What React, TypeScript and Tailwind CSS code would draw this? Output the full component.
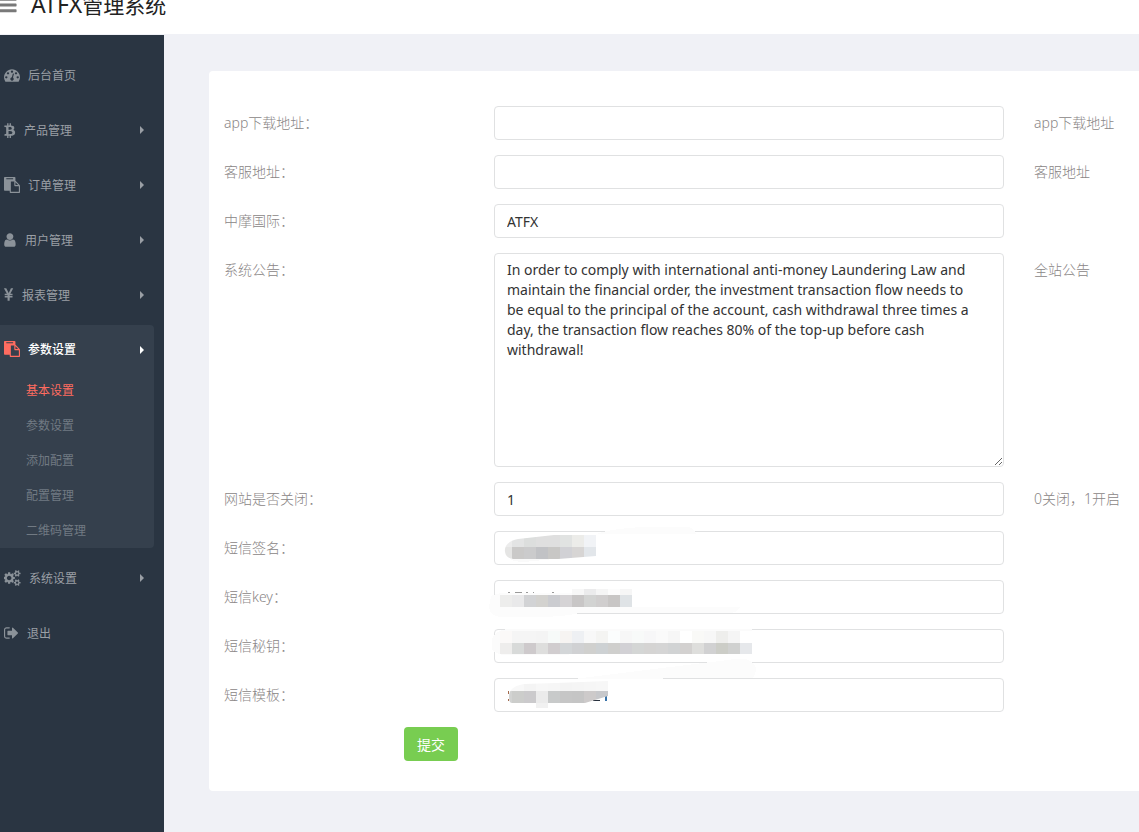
import { useState } from "react";
import type { ReactNode } from "react";

type IconProps = { d: string; viewBox: string; className: string };

function Icon({ d, viewBox, className }: IconProps) {
  return (
    <svg viewBox={viewBox} className={className} fill="currentColor" aria-hidden="true">
      <path d={d} />
    </svg>
  );
}

const BARS =
  "M1664 1344v128q0 26-19 45t-45 19h-1408q-26 0-45-19t-19-45v-128q0-26 19-45t45-19h1408q26 0 45 19t19 45zm0-512v128q0 26-19 45t-45 19h-1408q-26 0-45-19t-19-45v-128q0-26 19-45t45-19h1408q26 0 45 19t19 45zm0-512v128q0 26-19 45t-45 19h-1408q-26 0-45-19t-19-45v-128q0-26 19-45t45-19h1408q26 0 45 19t19 45z";
const DASHBOARD =
  "M384 1152q0-53-37.5-90.5t-90.5-37.5-90.5 37.5-37.5 90.5 37.5 90.5 90.5 37.5 90.5-37.5 37.5-90.5zm192-448q0-53-37.5-90.5t-90.5-37.5-90.5 37.5-37.5 90.5 37.5 90.5 90.5 37.5 90.5-37.5 37.5-90.5zm428 481l101-382q6-26-7.5-48.5t-38.5-29.5-48 6.5-30 39.5l-101 382q-60 5-107 43.5t-63 98.5q-20 77 20 146t117 89 146-20 89-117q16-60-6-117t-72-91zm660-33q0-53-37.5-90.5t-90.5-37.5-90.5 37.5-37.5 90.5 37.5 90.5 90.5 37.5 90.5-37.5 37.5-90.5zm-640-640q0-53-37.5-90.5t-90.5-37.5-90.5 37.5-37.5 90.5 37.5 90.5 90.5 37.5 90.5-37.5 37.5-90.5zm448 192q0-53-37.5-90.5t-90.5-37.5-90.5 37.5-37.5 90.5 37.5 90.5 90.5 37.5 90.5-37.5 37.5-90.5zm320 448q0 261-141 483-19 29-54 29h-1402q-35 0-54-29-141-221-141-483 0-182 71-348t191-286 286-191 348-71 348 71 286 191 191 286 71 348z";
const BITCOIN =
  "M1217 644q18 182-131 258 117 28 175 103t45 214q-7 71-32.5 125t-64.5 89-97 58.5-121.5 34.5-145.5 15v255h-154v-251q-80 0-122-1v252h-154v-255q-18 0-54-.5t-55-.5h-200l31-183h111q50 0 58-51v-402h16q-6-1-16-1v-287q-13-68-89-68h-111v-164l212 1q64 0 97-1v-252h154v247q82-2 122-2v-245h154v252q79 7 140 22.5t113 45 82.5 78 36.5 114.5zm-215 545q0-36-15-64t-37-46-57.5-30.5-65.5-18.5-74-9-69-3-64.5 1-47.5 1v338q8 0 37 .5t48 .5 53-1.5 58.5-4 57-8.5 55.5-14 47.5-21 39.5-30 24.5-40 9.5-51zm-71-476q0-33-12.5-58.5t-30.5-42-48-28-55-16.5-61.5-8-58-2.5-54 1-39.5.5v307q5 0 34.5.5t46.5 0 50-2 55-5.5 51.5-11 48.5-18.5 37-27 27-38.5 9-51z";
const PASTE =
  "M768 1664h896v-640h-416q-40 0-68-28t-28-68v-416h-384v1152zm256-1440v-64q0-13-9.5-22.5t-22.5-9.5h-704q-13 0-22.5 9.5t-9.5 22.5v64q0 13 9.5 22.5t22.5 9.5h704q13 0 22.5-9.5t9.5-22.5zm256 672h299l-299-299v299zm512 128v672q0 40-28 68t-68 28h-960q-40 0-68-28t-28-68v-160h-544q-40 0-68-28t-28-68v-1344q0-40 28-68t68-28h1088q40 0 68 28t28 68v328q21 13 36 28l408 408q28 28 48 76t20 88z";
const USER =
  "M1536 1399q0 109-62.5 187t-150.5 78h-854q-88 0-150.5-78t-62.5-187q0-85 8.5-160.5t31.5-152 58.5-131 94-89 134.5-34.5q131 128 313 128t313-128q76 0 134.5 34.5t94 89 58.5 131 31.5 152 8.5 160.5zm-256-887q0 159-112.5 271.5t-271.5 112.5-271.5-112.5-112.5-271.5 112.5-271.5 271.5-112.5 271.5 112.5 112.5 271.5z";
const YEN =
  "M985.5 1536h-172q-13 0-22.5-9t-9.5-23v-330h-288q-13 0-22.5-9t-9.5-23v-103q0-13 9.5-22.5t22.5-9.5h288v-85h-288q-13 0-22.5-9t-9.5-23v-104q0-13 9.5-22.5t22.5-9.5h214l-321-578q-8-16 0-32 10-16 28-16h194q19 0 29 18l215 425q19 38 56 125 10-24 30.5-68t27.5-61l191-420q8-19 29-19h191q17 0 27 16 9 14 1 31l-313 579h215q13 0 22.5 9.5t9.5 22.5v104q0 14-9.5 23t-22.5 9h-290v85h290q13 0 22.5 9.5t9.5 22.5v103q0 14-9.5 23t-22.5 9h-290v330q0 13-9.5 22.5t-22.5 9.5z";
const COGS =
  "M832 896q0-106-75-181t-181-75-181 75-75 181 75 181 181 75 181-75 75-181zm768 512q0-52-38-90t-90-38-90 38-38 90q0 53 37.5 90.5t90.5 37.5 90.5-37.5 37.5-90.5zm0-1024q0-52-38-90t-90-38-90 38-38 90q0 53 37.5 90.5t90.5 37.5 90.5-37.5 37.5-90.5zm-384 421v185q0 10-7 19.5t-16 10.5l-155 24q-11 35-32 76 34 48 90 115 7 11 7 20 0 12-7 19-23 30-82.5 89.5t-78.5 59.5q-11 0-21-7l-115-90q-37 19-77 31-11 108-23 155-7 24-30 24h-186q-11 0-20-7.5t-10-17.5l-23-153q-34-10-75-31l-118 89q-7 7-20 7-11 0-21-8-144-133-144-160 0-9 7-19 10-14 41-53t47-61q-23-44-35-82l-152-24q-10-1-17-9.5t-7-19.5v-185q0-10 7-19.5t16-10.5l155-24q11-35 32-76-34-48-90-115-7-11-7-20 0-12 7-20 22-30 82-89t79-59q11 0 21 7l115 90q34-18 77-32 11-108 23-154 7-24 30-24h186q11 0 20 7.5t10 17.5l23 153q34 10 75 31l118-89q8-7 20-7 11 0 21 8 144 133 144 160 0 8-7 19-12 16-42 54t-45 60q23 48 34 82l152 23q10 2 17 10.5t7 19.5zm640 533v140q0 16-149 31-12 27-30 52 51 113 51 138 0 4-4 7-122 71-124 71-8 0-46-47t-52-68q-20 2-30 2t-30-2q-14 21-52 68t-46 47q-2 0-124-71-4-3-4-7 0-25 51-138-18-25-30-52-149-15-149-31v-140q0-16 149-31 13-29 30-52-51-113-51-138 0-4 4-7 4-2 35-20t59-34 30-16q8 0 46 46.5t52 67.5q20-2 30-2t30 2q51-71 92-112l6-2q4 0 124 70 4 3 4 7 0 25-51 138 17 23 30 52 149 15 149 31zm0-1024v140q0 16-149 31-12 27-30 52 51 113 51 138 0 4-4 7-122 71-124 71-8 0-46-47t-52-68q-20 2-30 2t-30-2q-14 21-52 68t-46 47q-2 0-124-71-4-3-4-7 0-25 51-138-18-25-30-52-149-15-149-31v-140q0-16 149-31 13-29 30-52-51-113-51-138 0-4 4-7 4-2 35-20t59-34 30-16q8 0 46 46.5t52 67.5q20-2 30-2t30 2q51-71 92-112l6-2q4 0 124 70 4 3 4 7 0 25-51 138 17 23 30 52 149 15 149 31z";
const SIGN_OUT =
  "M704 1440q0 4 1 20t.5 26.5-3 23.5-10 19.5-20.5 6.5h-320q-119 0-203.5-84.5t-84.5-203.5v-704q0-119 84.5-203.5t203.5-84.5h320q13 0 22.5 9.5t9.5 22.5q0 4 1 20t.5 26.5-3 23.5-10 19.5-20.5 6.5h-320q-66 0-113 47t-47 113v704q0 66 47 113t113 47h312l11.5 1 11.5 3 8 5.5 7 9 2 13.5zm928-544q0 26-19 45l-544 544q-19 19-45 19t-45-19-19-45v-288h-448q-26 0-45-19t-19-45v-384q0-26 19-45t45-19h448v-288q0-26 19-45t45-19 45 19l544 544q19 19 19 45z";

type Item = {
  label: string;
  icon: IconProps;
  arrow?: boolean;
  children?: string[];
};

const MENU: Item[] = [
  { label: "后台首页", icon: { d: DASHBOARD, viewBox: "0 0 1792 1792", className: "h-4 w-4" } },
  { label: "产品管理", icon: { d: BITCOIN, viewBox: "64 0 1344 1792", className: "h-4 w-3" }, arrow: true },
  { label: "订单管理", icon: { d: PASTE, viewBox: "0 0 1792 1792", className: "h-4 w-4" }, arrow: true },
  { label: "用户管理", icon: { d: USER, viewBox: "256 0 1408 1792", className: "h-4 w-[13px]" }, arrow: true },
  { label: "报表管理", icon: { d: YEN, viewBox: "384 0 1120 1792", className: "h-4 w-[10px]" }, arrow: true },
  {
    label: "参数设置",
    icon: { d: PASTE, viewBox: "0 0 1792 1792", className: "h-4 w-4" },
    arrow: true,
    children: ["基本设置", "参数设置", "添加配置", "配置管理", "二维码管理"],
  },
  { label: "系统设置", icon: { d: COGS, viewBox: "0 0 1904 1792", className: "h-4 w-[17px]" }, arrow: true },
  { label: "退出", icon: { d: SIGN_OUT, viewBox: "64 0 1680 1792", className: "h-4 w-[15px]" } },
];

function Arrow() {
  return (
    <svg viewBox="0 0 4 8" className="mb-px ml-auto h-2 w-1" fill="currentColor" aria-hidden="true">
      <path d="M0 0 4 4 0 8Z" />
    </svg>
  );
}

function MenuItem({ item }: { item: Item }) {
  const open = Boolean(item.children);
  return (
    <li className={open ? "mt-[2px] mr-[10px] mb-[3px] rounded-r bg-[#35404d]" : "mr-[10px]"}>
      <a
        href="#"
        className={
          open
            ? "flex h-[50px] items-center gap-2 pr-[10px] pl-1 font-medium text-white"
            : "flex h-[55px] items-center gap-2 pr-[10px] pl-1 text-[#9a9fa5]"
        }
      >
        <span className={open ? "pb-[2px] text-[#ff6c60]" : "pb-[2px] text-[#8b9299]"}>
          <Icon {...item.icon} />
        </span>
        {item.label}
        {item.arrow && <Arrow />}
      </a>
      {item.children && (
        <ul className="-mt-[2px]">
          {item.children.map((child, i) => (
            <li key={child}>
              <a
                href="#"
                className={
                  i === 0
                    ? "flex h-[35px] items-center pl-[26px] text-[#ff6c60]"
                    : "flex h-[35px] items-center pl-[26px] text-[#717a83]"
                }
              >
                {child}
              </a>
            </li>
          ))}
        </ul>
      )}
    </li>
  );
}

type Strip = { x: number; y: number; h: number; colors: string[] };

function Cells({ x, y, h, colors }: Strip) {
  return (
    <>
      {colors.map((c, i) => (
        <rect key={i} x={x + i * 12} y={y} width={12} height={h} fill={c} />
      ))}
    </>
  );
}

function Mask({ children }: { children: ReactNode }) {
  return (
    <svg
      className="pointer-events-none absolute inset-0 h-full w-full overflow-visible"
      shapeRendering="crispEdges"
      aria-hidden="true"
    >
      {children}
    </svg>
  );
}

const SIGNATURE_MASK = (
  <Mask>
    <clipPath id="sig">
      <path d="M102 4H60L24 8C14 10 10 15 11 21C12 26 15 28 22 28H64L102 25Z" />
    </clipPath>
    <path d="M102 3C125-5 170-5 194-4Q200-3 202 3Z" fill="#fcfcfc" />
    <path d="M12 22Q14 31 30 31L70 27Z" fill="#fafafa" />
    <g clipPath="url(#sig)">
      <Cells x={6} y={4} h={12} colors={["#ececec", "#e3e4e4", "#dcdedd", "#dfdfdf", "#dfdfdf", "#e1e3e2", "#ecece9", "#f1f3f6"]} />
      <Cells x={6} y={16} h={12} colors={["#e5e5e4", "#cac9c8", "#cbcbcc", "#c1c2c5", "#c8c7c5", "#d1d1d5", "#d7d5d4", "#e2e6ea"]} />
    </g>
  </Mask>
);

const KEY_MASK = (
  <Mask>
    <path d="M-3 16Q4 12 20 13H138V27H246Q243 33 235 33H85Q70 37 40 37H6Q-4 36-5 27Z" fill="#fcfcfc" />
    <path d="M14 12h2M21 12h7M32 12h2M39 12h1M58 12h2" stroke="#9a9a9a" strokeWidth="1" />
    <Cells x={78} y={9} h={6} colors={["#f7f7f7", "#ebebec", "#f5f5f5", "#fcfcfc", "#f6f6f6"]} />
    <Cells x={6} y={15} h={12} colors={["#ededec", "#e9e9ea", "#d2d3d5", "#d3d2cf", "#cbccd0", "#d5d3d5", "#c8c6c6", "#d2d3d2", "#d0cece", "#c8c6c5", "#dfe3e6"]} />
  </Mask>
);

const SECRET_MASK = (
  <Mask>
    <path d="M-2 10Q1 1 14 0H258V2H246V24L18 26Q2 27-2 20Z" fill="#fbfbfb" />
    <Cells x={6} y={2} h={12} colors={["#fbf9f8", "#f5f5f5", "#f5f5f5", "#f4f4f4", "#f7faf9", "#f6f4f2", "#eef0f3", "#f8f8f8", "#f4f4f2", "#fbfdfd", "#f7f7f7", "#f8faf9", "#f7f7f8", "#fafafa", "#f6f6f6", "#ffffff", "#f9f9f7", "#f7f7f7", "#eeeeec", "#f5f5f5"]} />
    <Cells x={6} y={14} h={11} colors={["#eeedec", "#d8dad9", "#cecacc", "#dededd", "#d1cdcf", "#d3d6d8", "#d0d1d3", "#d0d0ce", "#cdd1d3", "#cfcfcd", "#d2d1d5", "#d4d6d5", "#d5d4d3", "#d5d5d5", "#d1d3d4", "#d3d1d0", "#dededc", "#d1d1d2", "#cccdc7", "#d0d1d0", "#e6e8eb"]} />
  </Mask>
);

const TEMPLATE_MASK = (
  <Mask>
    <clipPath id="tpl">
      <path d="M114 3L62 5L30 6C18 8 15 13 15 19Q15 25 18 25H42V30H54V25H91L114 18Z" />
    </clipPath>
    <path d="M80 1L160-9L234-18Q258-23 262-10Q262-3 258 0Z" fill="#fcfcfc" />
    <path d="M14 13v3M14 21v2" stroke="#a36a4d" strokeWidth="1" />
    <path d="M99 22h7" stroke="#27303d" strokeWidth="1" />
    <path d="M112 18v5" stroke="#3973a9" strokeWidth="2" />
    <g clipPath="url(#tpl)">
      <Cells x={6} y={3} h={10} colors={["#f7f7f7", "#f8f8f8", "#f4f4f4", "#f7f7f7", "#f6f6f6", "#f4f4f4", "#f5f5f5", "#f6f6f6", "#f7f7f7"]} />
      <Cells x={6} y={13} h={12} colors={["#d2d3d2", "#cccdcb", "#cbcacc", "#ebebeb", "#c8caca", "#c6c6c6", "#c5c5c5", "#cdcaca", "#c7c8cb"]} />
      <rect x={42} y={25} width={12} height={5} fill="#f1f1f1" />
    </g>
  </Mask>
);

type Field = { id: string; label: string; value: string; hint?: string; rows?: boolean; mask?: ReactNode };

const FIELDS: Field[] = [
  { id: "app-url", label: "app下载地址：", value: "", hint: "app下载地址" },
  { id: "service-url", label: "客服地址：", value: "", hint: "客服地址" },
  { id: "site-name", label: "中摩国际：", value: "ATFX" },
  {
    id: "notice",
    label: "系统公告：",
    value:
      "In order to comply with international anti-money Laundering Law and maintain the financial order, the investment transaction flow needs to be equal to the principal of the account, cash withdrawal three times a day, the transaction flow reaches 80% of the top-up before cash withdrawal!",
    hint: "全站公告",
    rows: true,
  },
  { id: "site-open", label: "网站是否关闭：", value: "1", hint: "0关闭，1开启" },
  { id: "sms-sign", label: "短信签名：", value: "", mask: SIGNATURE_MASK },
  { id: "sms-key", label: "短信key：", value: "", mask: KEY_MASK },
  { id: "sms-secret", label: "短信秘钥：", value: "", mask: SECRET_MASK },
  { id: "sms-template", label: "短信模板：", value: "", mask: TEMPLATE_MASK },
];

function FieldRow({ field }: { field: Field }) {
  const [value, setValue] = useState(field.value);
  return (
    <div className="grid grid-cols-[270px_minmax(0,1fr)_105px] items-start">
      <label htmlFor={field.id} className="pt-[7px] leading-5">
        {field.label}
      </label>
      <div className="relative mr-[30px] flex">
        {field.rows ? (
          <textarea
            id={field.id}
            value={value}
            onChange={(e) => setValue(e.target.value)}
            className="h-[214px] w-full resize rounded border border-[#e0e1e2] bg-white py-[6px] pr-[22px] pl-3 text-[14px] leading-5 font-normal text-[#333] outline-none"
          />
        ) : (
          <input
            id={field.id}
            type="text"
            value={value}
            onChange={(e) => setValue(e.target.value)}
            className="h-[34px] w-full rounded border border-[#e0e1e2] bg-white px-3 text-[14px] leading-5 font-normal text-[#333] outline-none"
          />
        )}
        {field.mask}
      </div>
      <p className="pt-[7px] leading-5">{field.hint}</p>
    </div>
  );
}

export default function App() {
  return (
    <div className="flex min-h-screen flex-col bg-[#f0f1f6] font-['Noto_Sans','Noto_Sans_CJK_SC',sans-serif]">
      <header className="flex h-[34px] items-start bg-white">
        <button type="button" aria-label="菜单" className="-mt-[5px] -ml-[2px] text-[#797979]">
          <Icon d={BARS} viewBox="0 0 1792 1792" className="h-5 w-5" />
        </button>
        <h1 className="-mt-3 ml-[13px] text-[21px] leading-8 text-[#222]">
          <span className="text-[23px]">ATFX</span>管理系统
        </h1>
      </header>
      <div className="flex flex-1">
        <nav className="mt-px w-[164px] shrink-0 bg-[#2a3542] pt-[13px] text-[12px]">
          <ul>
            {MENU.map((item, i) => (
              <MenuItem key={i} item={item} />
            ))}
          </ul>
        </nav>
        <main className="min-w-0 flex-1 pt-[37px] pl-[45px]">
          <form
            onSubmit={(e) => e.preventDefault()}
            className="flex flex-col gap-[15px] rounded-l bg-white pt-[35px] pb-[30px] pl-[15px] text-[14px] font-light text-[#8a8686]"
          >
            {FIELDS.map((f) => (
              <FieldRow key={f.id} field={f} />
            ))}
            <button
              type="submit"
              className="ml-[180px] h-[34px] w-[54px] rounded bg-[#78cd51] text-[14px] font-normal text-white"
            >
              提交
            </button>
          </form>
        </main>
      </div>
    </div>
  );
}
